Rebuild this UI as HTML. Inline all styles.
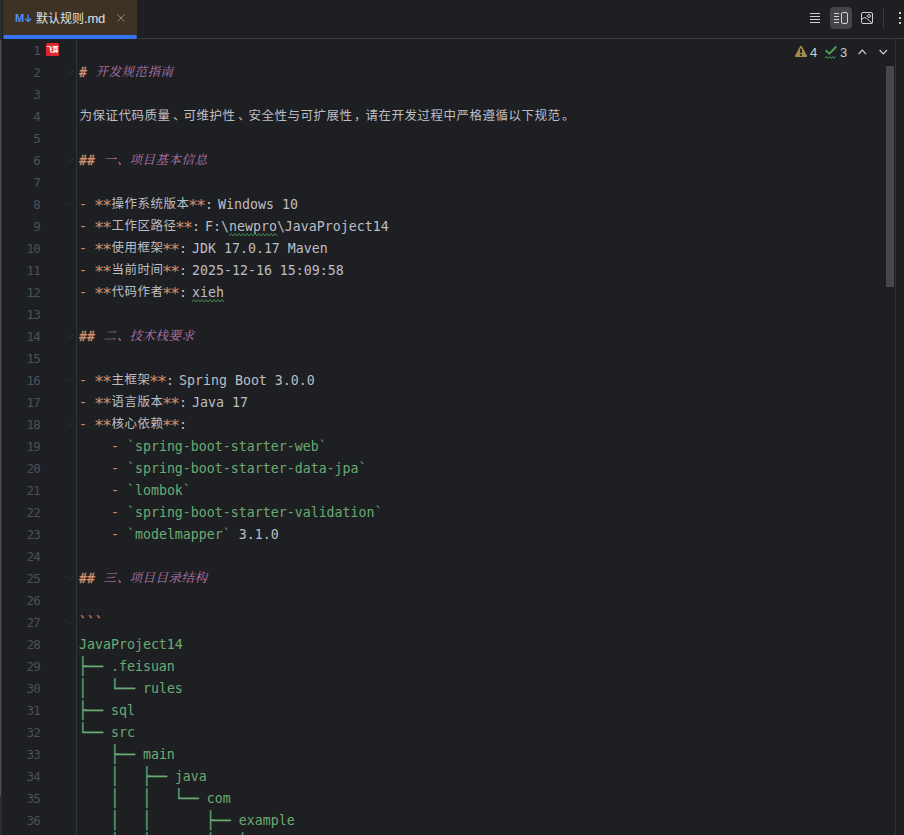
<!DOCTYPE html>
<html lang="zh-CN">
<head>
<meta charset="utf-8">
<title>默认规则.md</title>
<style>
html,body{margin:0;padding:0;}
body{width:904px;height:835px;overflow:hidden;background:#1e1f22;position:relative;
  font-family:"Liberation Sans","Noto Sans CJK SC",sans-serif;color:#bcbec4;}
#app{position:absolute;left:0;top:0;width:904px;height:835px;overflow:hidden;background:#1e1f22;}
/* left strip */
.ls1{position:absolute;left:0;top:0;width:2px;height:835px;background:#2b2d30;}
.ls2{position:absolute;left:0;top:40px;width:1px;height:756px;background:#4e5054;}
/* tab */
.tab{position:absolute;left:3px;top:0;width:134px;height:38px;background:#3d3223;}
.tabline{position:absolute;left:3px;top:35px;width:134px;height:4px;background:#3574f0;border-radius:2px;}
.tabname{position:absolute;left:36px;top:9px;font-size:13px;letter-spacing:-0.2px;line-height:18px;color:#dfe1e5;white-space:nowrap;}
.tabname span{font-size:12px;letter-spacing:0;font-family:"Noto Sans CJK SC",sans-serif;}
.hr{position:absolute;left:137px;top:38px;width:767px;height:1px;background:#393b40;}
.mdicon{position:absolute;left:14px;top:11px;}
.close{position:absolute;left:116px;top:13px;}
/* editor */
.gline{position:absolute;left:76px;top:39px;width:1px;height:796px;background:#313438;}
.ln{position:absolute;left:0;width:40px;height:22px;line-height:23px;text-align:right;
  font-family:"DejaVu Sans Mono","Liberation Mono",monospace;font-size:12.6px;letter-spacing:-0.8px;color:#4b5059;}
.cl{position:absolute;left:79px;margin-top:1px;height:22px;line-height:22px;white-space:pre;
  font-family:"DejaVu Sans Mono","Liberation Mono",monospace;font-size:13.289px;color:#bcbec4;}
.cj{font-family:"Noto Sans CJK SC",sans-serif;font-size:12.5px;letter-spacing:0.5px;line-height:0;position:relative;top:-1px;left:0.4px;}
.bx{display:inline-block;line-height:1;transform:scaleY(1.24);transform-origin:50% 6.9px;-webkit-text-stroke:0.3px #6aab73;}
.as{display:inline-block;line-height:1;transform:translateY(1.4px) scale(1.25);}
.dn{position:relative;left:2.5px;}
.dp{position:relative;left:1.5px;}
.h .dn{left:0.5px;}
.o{color:#cf8e6d;}
.hm{color:#cf8e6d;font-style:italic;-webkit-text-stroke:0.35px #cf8e6d;}
.h{color:#b878b0;font-style:italic;}
.h.cj{font-family:"Noto Serif CJK SC",serif;}
.g{color:#6aab73;}
.f{color:#d4805c;-webkit-text-stroke:0.3px #d4805c;}
.ns{letter-spacing:-3px;}
.wv{position:absolute;top:17px;}
.fold{position:absolute;left:64.5px;}
.badge{position:absolute;left:46px;top:43px;width:13px;height:13px;background:#de262c;border-radius:1.5px;overflow:hidden;
  }
.badge svg{display:block;}
/* right */
.vline{position:absolute;left:895px;top:39px;width:1px;height:796px;background:#2f3136;}
.thumb{position:absolute;left:886px;top:66px;width:8px;height:221px;background:#464749;}
.tb{position:absolute;}
.insp{position:absolute;font-size:13px;line-height:16px;color:#ced0d6;}
</style>
</head>
<body>
<div id="app">
  <div class="ls1"></div><div class="ls2"></div>
  <div class="tab"></div>
  <div class="hr"></div>
  <div class="tabline"></div>
  <svg class="mdicon" width="18" height="16" viewBox="0 0 18 16">
    <text x="1" y="11" font-family="Liberation Sans, sans-serif" font-weight="bold" font-size="10" fill="#548af7" textLength="9.2" lengthAdjust="spacingAndGlyphs">M</text>
    <path d="M14.2 4 V10.4 M11.7 8 L14.2 10.5 L16.7 8" fill="none" stroke="#548af7" stroke-width="1.3" stroke-linecap="round" stroke-linejoin="round"/>
  </svg>
  <div class="tabname"><span>默认规则</span>.md</div>
  <svg class="close" width="10" height="10" viewBox="0 0 10 10"><path d="M1.5 1.5 L8.5 8.5 M8.5 1.5 L1.5 8.5" stroke="#868a91" stroke-width="1" fill="none"/></svg>

  <!-- toolbar icons -->
  <svg class="tb" style="left:806px;top:7px" width="98" height="22" viewBox="0 0 98 22">
    <g stroke="#ced0d6" stroke-width="1" fill="none">
      <path d="M4 6.5 H14 M4 9.5 H14 M4 12.5 H14 M4 15.5 H14"/>
    </g>
    <rect x="24" y="0" width="22" height="22" rx="4" fill="#43454a"/>
    <g stroke="#ced0d6" stroke-width="1" fill="none">
      <path d="M28 6.5 H33 M28 9.5 H33 M28 12.5 H33 M28 15.5 H33"/>
      <rect x="35.5" y="5.5" width="6" height="11" rx="1.5"/>
      <rect x="55.5" y="5.5" width="11" height="11" rx="1.5"/>
      <circle cx="63" cy="9" r="1.5"/>
      <path d="M55.5 12.5 Q58.5 9.3 60.5 11.3 L66.3 16.3"/>
    </g>
    <rect x="77" y="1" width="1" height="20" fill="#393b40"/>
    <g fill="#ced0d6"><rect x="93" y="5" width="2" height="2"/><rect x="93" y="10" width="2" height="2"/><rect x="93" y="15" width="2" height="2"/></g>
  </svg>

  <div class="gline"></div>
  <div class="badge"><svg width="13" height="13" viewBox="0 0 13 13"><text x="0.4" y="9.1" font-family="Noto Sans CJK SC, sans-serif" font-weight="bold" font-size="7" fill="#ffffff" textLength="12.2" lengthAdjust="spacingAndGlyphs">飞算</text></svg></div>
<div class="ln" style="top:39px">1</div>
<div class="ln" style="top:61px">2</div>
<div class="cl" style="top:61px"><span class="hm">#</span> <span class="h cj">开发规范指南</span></div>
<div class="ln" style="top:83px">3</div>
<div class="ln" style="top:105px">4</div>
<div class="cl" style="top:105px"><span class="cj">为保证代码质量<span class="dn">、</span>可维护性<span class="dn">、</span>安全性与可扩展性<span class="dp">，</span>请在开发过程中严格遵循以下规范<span class="dp">。</span></span></div>
<div class="ln" style="top:127px">5</div>
<div class="ln" style="top:149px">6</div>
<div class="cl" style="top:149px"><span class="hm">##</span> <span class="h cj">一<span class="dn">、</span>项目基本信息</span></div>
<div class="ln" style="top:171px">7</div>
<div class="ln" style="top:193px">8</div>
<div class="cl" style="top:193px"><span class="o">- <span class="as">*</span><span class="as">*</span></span><span class="cj">操作系统版本</span><span class="o"><span class="as">*</span><span class="as">*</span></span>:<span class="ns"> </span>Windows 10</div>
<div class="ln" style="top:215px">9</div>
<div class="cl" style="top:215px"><span class="o">- <span class="as">*</span><span class="as">*</span></span><span class="cj">工作区路径</span><span class="o"><span class="as">*</span><span class="as">*</span></span>:<span class="ns"> </span>F:\newpro\JavaProject14<svg class="wv" style="left:150px" width="48" height="4" viewBox="0 0 48 4"><path d="M0 3 l2 -2.5 l2 2.5 l2 -2.5 l2 2.5 l2 -2.5 l2 2.5 l2 -2.5 l2 2.5 l2 -2.5 l2 2.5 l2 -2.5 l2 2.5 l2 -2.5 l2 2.5 l2 -2.5 l2 2.5 l2 -2.5 l2 2.5 l2 -2.5 l2 2.5 l2 -2.5 l2 2.5 l2 -2.5 l2 2.5" fill="none" stroke="#4a9657" stroke-width="0.9"/></svg></div>
<div class="ln" style="top:237px">10</div>
<div class="cl" style="top:237px"><span class="o">- <span class="as">*</span><span class="as">*</span></span><span class="cj">使用框架</span><span class="o"><span class="as">*</span><span class="as">*</span></span>:<span class="ns"> </span>JDK 17.0.17 Maven</div>
<div class="ln" style="top:259px">11</div>
<div class="cl" style="top:259px"><span class="o">- <span class="as">*</span><span class="as">*</span></span><span class="cj">当前时间</span><span class="o"><span class="as">*</span><span class="as">*</span></span>:<span class="ns"> </span>2025-12-16 15:09:58</div>
<div class="ln" style="top:281px">12</div>
<div class="cl" style="top:281px"><span class="o">- <span class="as">*</span><span class="as">*</span></span><span class="cj">代码作者</span><span class="o"><span class="as">*</span><span class="as">*</span></span>:<span class="ns"> </span>xieh<svg class="wv" style="left:113px" width="32" height="4" viewBox="0 0 32 4"><path d="M0 3 l2 -2.5 l2 2.5 l2 -2.5 l2 2.5 l2 -2.5 l2 2.5 l2 -2.5 l2 2.5 l2 -2.5 l2 2.5 l2 -2.5 l2 2.5 l2 -2.5 l2 2.5 l2 -2.5 l2 2.5" fill="none" stroke="#4a9657" stroke-width="0.9"/></svg></div>
<div class="ln" style="top:303px">13</div>
<div class="ln" style="top:325px">14</div>
<div class="cl" style="top:325px"><span class="hm">##</span> <span class="h cj">二<span class="dn">、</span>技术栈要求</span></div>
<div class="ln" style="top:347px">15</div>
<div class="ln" style="top:369px">16</div>
<div class="cl" style="top:369px"><span class="o">- <span class="as">*</span><span class="as">*</span></span><span class="cj">主框架</span><span class="o"><span class="as">*</span><span class="as">*</span></span>:<span class="ns"> </span>Spring Boot 3.0.0</div>
<div class="ln" style="top:391px">17</div>
<div class="cl" style="top:391px"><span class="o">- <span class="as">*</span><span class="as">*</span></span><span class="cj">语言版本</span><span class="o"><span class="as">*</span><span class="as">*</span></span>:<span class="ns"> </span>Java 17</div>
<div class="ln" style="top:413px">18</div>
<div class="cl" style="top:413px"><span class="o">- <span class="as">*</span><span class="as">*</span></span><span class="cj">核心依赖</span><span class="o"><span class="as">*</span><span class="as">*</span></span>:</div>
<div class="ln" style="top:435px">19</div>
<div class="cl" style="top:435px">    <span class="o">-</span> <span class="g">`spring-boot-starter-web`</span></div>
<div class="ln" style="top:457px">20</div>
<div class="cl" style="top:457px">    <span class="o">-</span> <span class="g">`spring-boot-starter-data-jpa`</span></div>
<div class="ln" style="top:479px">21</div>
<div class="cl" style="top:479px">    <span class="o">-</span> <span class="g">`lombok`</span></div>
<div class="ln" style="top:501px">22</div>
<div class="cl" style="top:501px">    <span class="o">-</span> <span class="g">`spring-boot-starter-validation`</span></div>
<div class="ln" style="top:523px">23</div>
<div class="cl" style="top:523px">    <span class="o">-</span> <span class="g">`modelmapper`</span> 3.1.0</div>
<div class="ln" style="top:545px">24</div>
<div class="ln" style="top:567px">25</div>
<div class="cl" style="top:567px"><span class="hm">##</span> <span class="h cj">三<span class="dn">、</span>项目目录结构</span></div>
<div class="ln" style="top:589px">26</div>
<div class="ln" style="top:611px">27</div>
<div class="cl" style="top:611px"><span class="f">```</span></div>
<div class="ln" style="top:633px">28</div>
<div class="cl" style="top:633px"><span class="g">JavaProject14</span></div>
<div class="ln" style="top:655px">29</div>
<div class="cl" style="top:655px"><span class="g"><span class="bx">├──</span> .feisuan</span></div>
<div class="ln" style="top:677px">30</div>
<div class="cl" style="top:677px"><span class="g"><span class="bx">│</span>   <span class="bx">└──</span> rules</span></div>
<div class="ln" style="top:699px">31</div>
<div class="cl" style="top:699px"><span class="g"><span class="bx">├──</span> sql</span></div>
<div class="ln" style="top:721px">32</div>
<div class="cl" style="top:721px"><span class="g"><span class="bx">└──</span> src</span></div>
<div class="ln" style="top:743px">33</div>
<div class="cl" style="top:743px"><span class="g">    <span class="bx">├──</span> main</span></div>
<div class="ln" style="top:765px">34</div>
<div class="cl" style="top:765px"><span class="g">    <span class="bx">│</span>   <span class="bx">├──</span> java</span></div>
<div class="ln" style="top:787px">35</div>
<div class="cl" style="top:787px"><span class="g">    <span class="bx">│</span>   <span class="bx">│</span>   <span class="bx">└──</span> com</span></div>
<div class="ln" style="top:809px">36</div>
<div class="cl" style="top:809px"><span class="g">    <span class="bx">│</span>   <span class="bx">│</span>       <span class="bx">├──</span> example</span></div>
<div class="ln" style="top:831px">37</div>
<div class="cl" style="top:831px"><span class="g">    <span class="bx">│</span>   <span class="bx">│</span>       <span class="bx">│</span>   <span class="bx">├──</span> demo</span></div>
<svg class="fold" style="top:69px" width="10" height="6" viewBox="0 0 10 6"><path d="M1 1 L5 5 L9 1" fill="none" stroke="#292b2e" stroke-width="1"/></svg>
<svg class="fold" style="top:157px" width="10" height="6" viewBox="0 0 10 6"><path d="M1 1 L5 5 L9 1" fill="none" stroke="#292b2e" stroke-width="1"/></svg>
<svg class="fold" style="top:201px" width="10" height="6" viewBox="0 0 10 6"><path d="M1 1 L5 5 L9 1" fill="none" stroke="#292b2e" stroke-width="1"/></svg>
<svg class="fold" style="top:333px" width="10" height="6" viewBox="0 0 10 6"><path d="M1 1 L5 5 L9 1" fill="none" stroke="#292b2e" stroke-width="1"/></svg>
<svg class="fold" style="top:377px" width="10" height="6" viewBox="0 0 10 6"><path d="M1 1 L5 5 L9 1" fill="none" stroke="#292b2e" stroke-width="1"/></svg>
<svg class="fold" style="top:421px" width="10" height="6" viewBox="0 0 10 6"><path d="M1 1 L5 5 L9 1" fill="none" stroke="#292b2e" stroke-width="1"/></svg>
<svg class="fold" style="top:575px" width="10" height="6" viewBox="0 0 10 6"><path d="M1 1 L5 5 L9 1" fill="none" stroke="#292b2e" stroke-width="1"/></svg>
<svg class="fold" style="top:619px" width="10" height="6" viewBox="0 0 10 6"><path d="M1 1 L5 5 L9 1" fill="none" stroke="#292b2e" stroke-width="1"/></svg>
  <!-- inspection widget -->
  <svg class="tb" style="left:794px;top:44px" width="96" height="16" viewBox="0 0 96 16">
    <path d="M6 2.6 Q7 1 8 2.6 L12.9 11.4 Q13.6 13 12 13 H2 Q0.4 13 1.1 11.4 Z" fill="#a68a4d"/>
    <rect x="6.1" y="4.6" width="1.8" height="4.4" fill="#1e1f22"/><rect x="6.1" y="10" width="1.8" height="1.8" fill="#1e1f22"/>
    <path d="M31.6 6.2 L35.4 9.7 L42.3 2.5" fill="none" stroke="#4f9e5b" stroke-width="1.9"/>
    <path d="M31 14.4 l1.5 -1.9 l1.5 1.9 l1.5 -1.9 l1.5 1.9 l1.5 -1.9 l1.5 1.9 l1.5 -1.9" fill="none" stroke="#4f9e5b" stroke-width="0.9"/>
    <path d="M64.6 10 L68.3 6.2 L72 10" fill="none" stroke="#ced0d6" stroke-width="1.2"/>
    <path d="M85.6 6 L89.3 9.8 L93 6" fill="none" stroke="#ced0d6" stroke-width="1.2"/>
  </svg>
  <div class="insp" style="left:810px;top:45px">4</div>
  <div class="insp" style="left:840px;top:45px">3</div>

  <div class="vline"></div>
  <div class="thumb"></div>
</div>
</body>
</html>
